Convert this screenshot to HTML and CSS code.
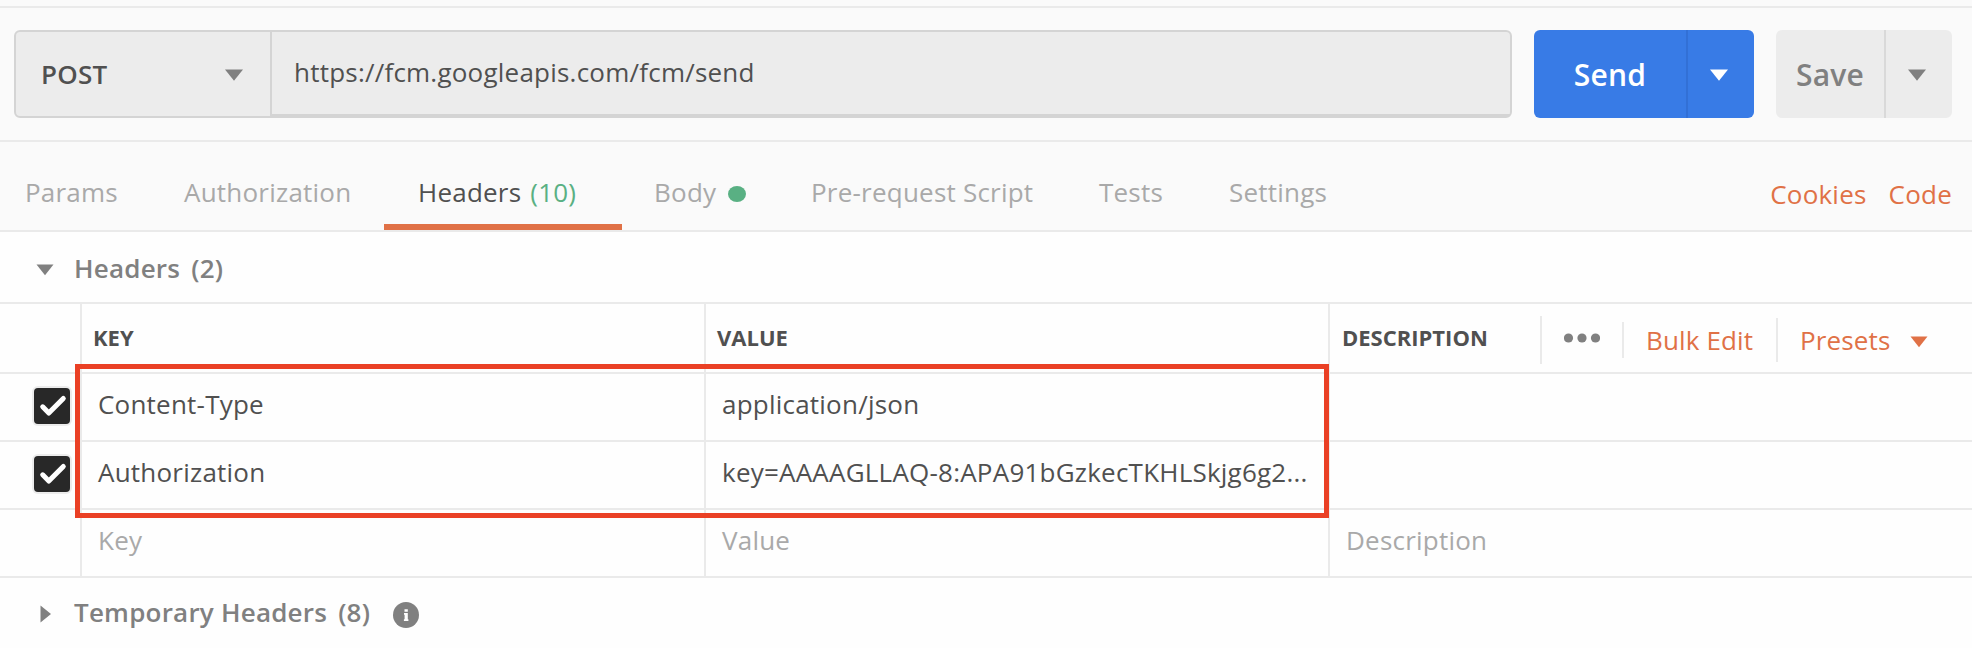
FILE: index.html
```html
<!DOCTYPE html>
<html lang="en">
<head>
<meta charset="utf-8">
<title>Request</title>
<link rel="stylesheet" href="styles.css">
</head>
<body>
<div class="request">
  <div class="topline"></div>
  <div class="urlbar">
    <div class="url-group">
      <div class="method"><span class="method-name">POST</span><svg class="caret" width="18" height="12" viewBox="0 0 18 12"><path d="M0 0.5H18L9 11.7Z"/></svg></div>
      <div class="url">https://fcm.googleapis.com/fcm/send</div>
    </div>
    <div class="button send"><span class="label">Send</span><span class="drop"><svg class="caret" width="18" height="12" viewBox="0 0 18 12"><path d="M0 0.5H18L9 11.7Z"/></svg></span></div>
    <div class="button save"><span class="label">Save</span><span class="drop"><svg class="caret" width="18" height="12" viewBox="0 0 18 12"><path d="M0 0.5H18L9 11.7Z"/></svg></span></div>
  </div>
  <div class="tabs">
    <div class="tab params">Params</div>
    <div class="tab auth">Authorization</div>
    <div class="tab active">Headers <span class="count">(10)</span></div>
    <div class="tab body-tab">Body<span class="dot"></span></div>
    <div class="tab script">Pre-request Script</div>
    <div class="tab tests">Tests</div>
    <div class="tab settings">Settings</div>
    <div class="links"><a>Cookies</a><a>Code</a></div>
  </div>
  <div class="section">
    <svg class="toggle" width="18" height="12" viewBox="0 0 18 12"><path d="M0.5 0.5H17.5L9 11.3Z"/></svg>
    <span class="section-title">Headers</span><span class="section-count">(2)</span>
  </div>
  <div class="table">
    <div class="row head">
      <div class="cell"></div>
      <div class="cell">KEY</div>
      <div class="cell">VALUE</div>
      <div class="cell last"><span class="desc">DESCRIPTION</span>
        <div class="more"><svg width="36" height="10" viewBox="0 0 36 10"><circle cx="4.5" cy="5" r="4.6"/><circle cx="18" cy="5" r="4.6"/><circle cx="31.5" cy="5" r="4.6"/></svg></div>
        <div class="bulk">Bulk Edit</div>
        <div class="presets">Presets<svg width="18" height="12" viewBox="0 0 18 12"><path d="M0.5 0.5H17.5L9 11.3Z"/></svg></div>
      </div>
    </div>
    <div class="row">
      <div class="cell check"><span class="box"><svg width="36" height="36" viewBox="0 0 36 36"><path d="M8.7 18.8L14.8 25L29.3 10.4"/></svg></span></div>
      <div class="cell">Content-Type</div>
      <div class="cell">application/json</div>
      <div class="cell"></div>
    </div>
    <div class="row">
      <div class="cell check"><span class="box"><svg width="36" height="36" viewBox="0 0 36 36"><path d="M8.7 18.8L14.8 25L29.3 10.4"/></svg></span></div>
      <div class="cell">Authorization</div>
      <div class="cell"><span class="key">key=AAAAGLLAQ-8:APA91bGzkecTKHLSkjg6g2...</span></div>
      <div class="cell"></div>
    </div>
    <div class="row hint">
      <div class="cell"></div>
      <div class="cell">Key</div>
      <div class="cell">Value</div>
      <div class="cell">Description</div>
    </div>
    <div class="highlight"></div>
  </div>
  <div class="section temporary">
    <svg class="toggle" width="18" height="18" viewBox="0 0 18 18"><path d="M4.5 0.5V17.5L15 9Z"/></svg>
    <span class="section-title">Temporary Headers</span><span class="section-count">(8)</span>
    <svg class="info" width="26" height="26" viewBox="0 0 26 26"><circle cx="13" cy="13" r="13"/><path d="M11.5 7.3H14.8V9.8H11.5ZM11 11H14.8V17.2H15.4V19H10.9V17.2H11.6V12.8H11Z"/></svg>
  </div>
</div>
</body>
</html>
```
FILE: styles.css
```css
* { box-sizing: border-box; }
body {
  margin: 0;
  background: #fefefe;
  font-family: "Open Sans", sans-serif;
  font-size: 26px;
  line-height: 36px;
  letter-spacing: 0.22px;
  color: #505050;
  white-space: nowrap;
}
svg { display: block; flex: none; }
.request { height: 648px; overflow: hidden; }
.topline { height: 8px; background: #fafafa; border-bottom: 2px solid #eaeaea; }
.urlbar {
  height: 134px;
  padding: 22px 20px 0 14px;
  display: flex;
  align-items: flex-start;
  background: #fafafa;
  border-bottom: 2px solid #eaeaea;
}
.url-group {
  width: 1498px;
  height: 88px;
  margin-right: 22px;
  display: flex;
  border: 2px solid #d4d4d4;
  border-radius: 6px;
  background: #ececec;
}
.method {
  width: 256px;
  padding: 0 27px 0 25px;
  display: flex;
  align-items: center;
  justify-content: space-between;
  border-right: 2px solid #d4d4d4;
  font-weight: 600;
}
.caret { margin-top: 2px; fill: #808080; }
.url { flex: 1; padding: 22px 0 0 22px; border-bottom: 2px solid #d4d4d4; }
.button {
  height: 88px;
  display: flex;
  border-radius: 6px;
  overflow: hidden;
  font-size: 30px;
  font-weight: 600;
}
.label { flex: 1; padding-top: 2px; display: flex; align-items: center; justify-content: center; }
.drop { width: 68px; padding-right: 4px; display: flex; align-items: center; justify-content: center; border-left: 2px solid #d9d9d9; }
.send { width: 220px; margin-right: 22px; background: #387be6; color: #fff; }
.send .drop { border-color: #3270d6; }
.send .caret { fill: #fff; }
.save { width: 176px; background: #ececec; color: #808080; }
.tabs {
  height: 90px;
  display: grid;
  grid-template-columns: 184px 200px 238px 156px 288px 130px 180px 1fr;
  background: #fafafa;
  border-bottom: 2px solid #eaeaea;
  color: #a9a9a9;
}
.tab { padding-top: 32px; }
.params { padding-left: 25px; }
.active { padding-left: 34px; color: #505050; border-bottom: 6px solid #e07146; }
.count { margin-left: 2px; color: #59b083; }
.body-tab { padding-left: 32px; display: flex; }
.dot { width: 18px; height: 16px; margin: 12px 0 0 12px; border-radius: 50%; background: #59b083; }
.script, .tests, .settings { padding-left: 33px; }
.links { display: flex; justify-content: flex-end; gap: 22px; padding: 34px 20px 0 0; color: #e07146; }
.section {
  height: 70px;
  padding: 1px 0 0 36px;
  display: flex;
  align-items: center;
  color: #808080;
  font-weight: 600;
}
.toggle { margin: 4px 20px 0 0; fill: #808080; }
.section-count { margin-left: 11px; }
.table { position: relative; border-top: 2px solid #eaeaea; }
.row { height: 68px; display: grid; grid-template-columns: 80px 624px 624px 1fr; border-bottom: 2px solid #eaeaea; }
.cell { padding: 12px 0 0 16px; border-left: 2px solid #eaeaea; }
.cell:first-child { padding: 0; border-left: 0; }
.head { height: 70px; }
.head .cell { padding: 15px 0 0 11px; font-size: 22px; font-weight: 700; letter-spacing: 0; }
.head .last { display: flex; padding: 0 0 0 12px; }
.desc { width: 198px; padding-top: 15px; }
.more { height: 48px; margin-top: 12px; width: 82px; padding: 17px 0 0 22px; border-left: 2px solid #eaeaea; fill: #808080; }
.bulk { height: 36px; margin-top: 18px; width: 154px; padding-left: 22px; border-left: 2px solid #eaeaea; }
.presets { height: 44px; margin-top: 14px; padding: 4px 0 0 22px; display: flex; border-left: 2px solid #eaeaea; }
.presets svg { margin: 14px 0 0 19px; fill: #e07146; }
.bulk, .presets { font-size: 26px; font-weight: 400; letter-spacing: 0.15px; color: #e07146; }
.cell.check { padding: 14px 0 0 34px; }
.box { display: block; width: 36px; height: 36px; border-radius: 4px; background: #282828; box-shadow: 0 0 0 2px #ececec; }
.box path { fill: none; stroke: #fff; stroke-width: 5; stroke-linecap: round; stroke-linejoin: round; }
.hint { color: #a9a9a9; }
.highlight { position: absolute; left: 75px; top: 60px; width: 1254px; height: 154px; border: 5px solid #ea4025; }
.temporary { padding-top: 0; }
.temporary .toggle { margin-top: 2px; }
.temporary .section-title, .temporary .section-count { margin-top: -2px; }
.info { margin: 4px 0 0 23px; fill: #808080; }
.info path { fill: #fff; }
```
